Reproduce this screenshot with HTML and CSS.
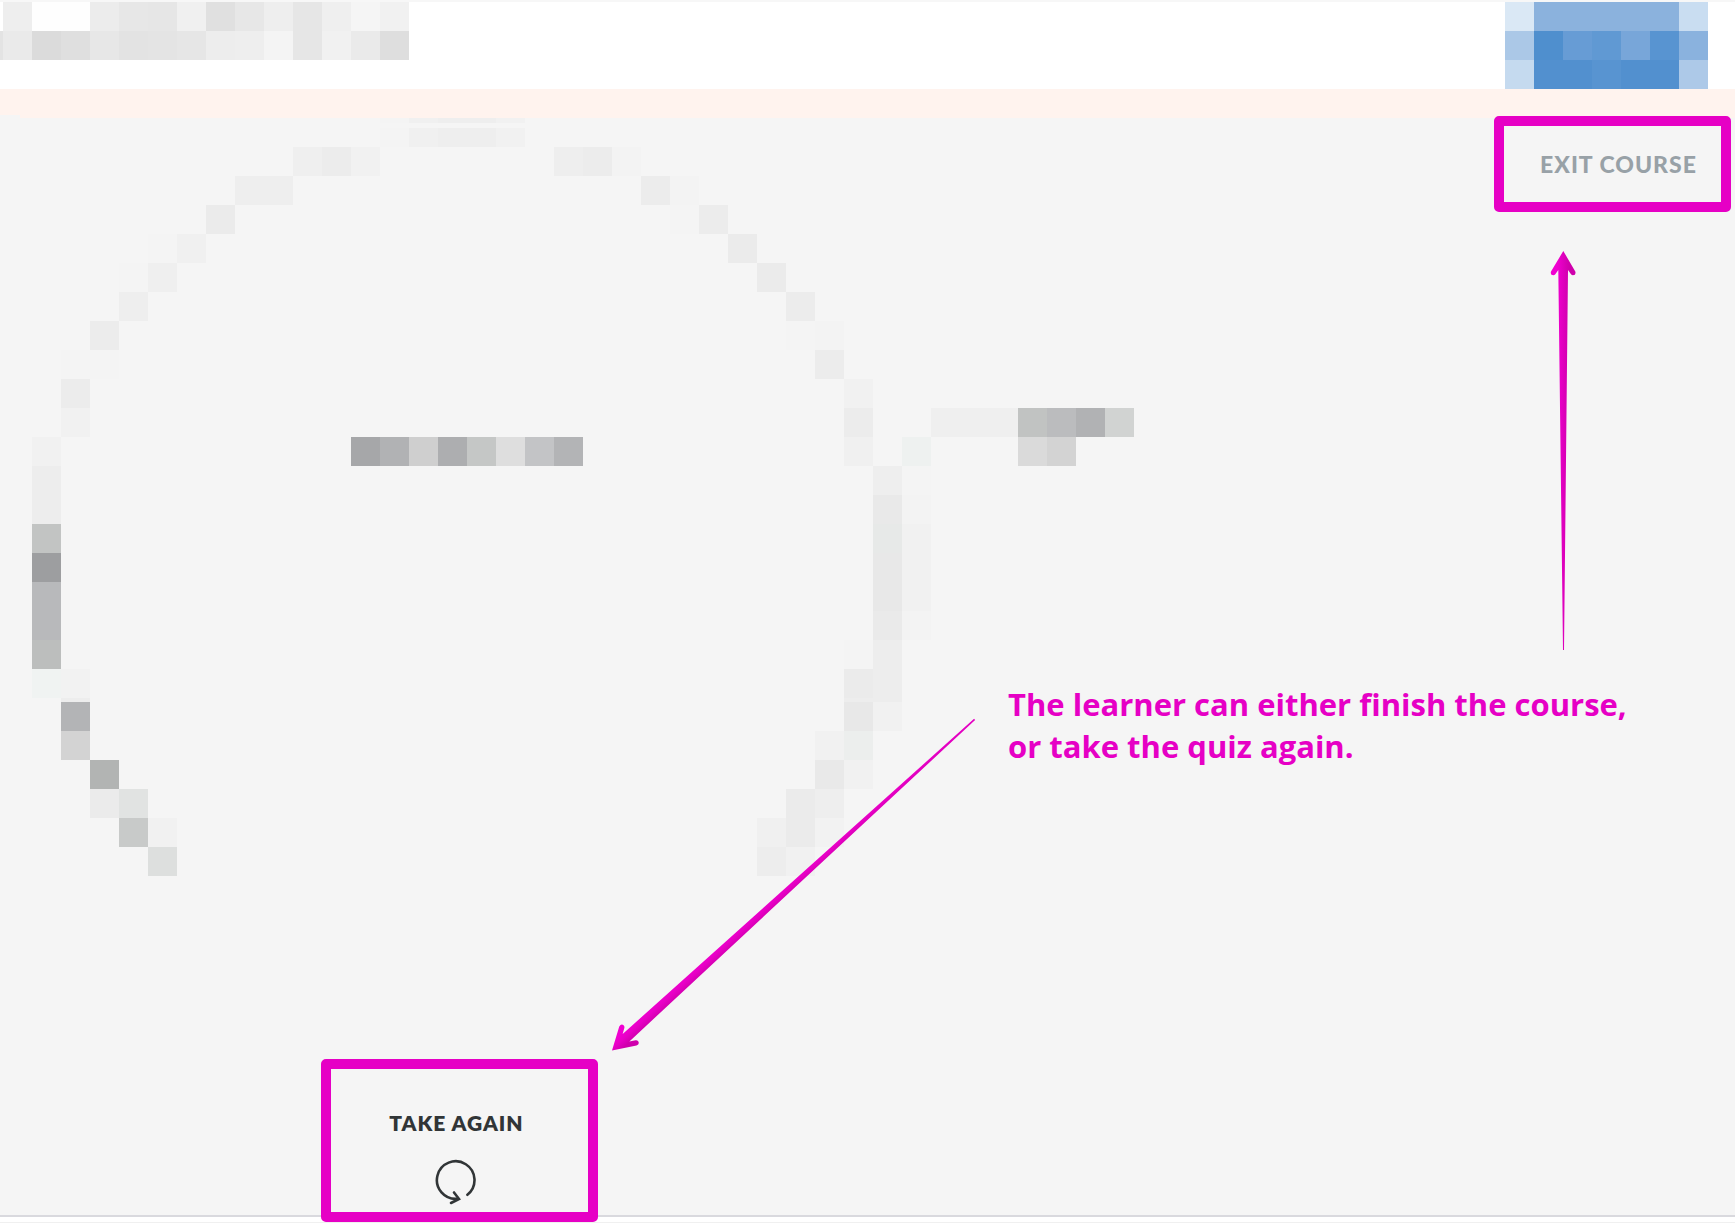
FILE: index.html
```html
<!DOCTYPE html>
<html lang="en">
<head>
<meta charset="utf-8">
<meta name="viewport" content="width=device-width, initial-scale=1">
<title>Quiz results</title>
<link rel="stylesheet" href="styles.css">
</head>
<body>
<header class="topbar">
  <svg class="mosaic" width="409" height="58" viewBox="-3 0 409 58" aria-hidden="true">
    <g transform="scale(29)">
      <rect x="0" y="0" width="1" height="1" fill="#eeeeee"/><rect x="1" y="0" width="2" height="1" fill="#fefefe"/><rect x="3" y="0" width="1" height="1" fill="#ececec"/><rect x="4" y="0" width="1" height="1" fill="#e7e7e7"/><rect x="5" y="0" width="1" height="1" fill="#e6e6e6"/><rect x="6" y="0" width="1" height="1" fill="#f0f0f0"/><rect x="7" y="0" width="1" height="1" fill="#e0e0e0"/><rect x="8" y="0" width="1" height="1" fill="#e7e7e7"/><rect x="9" y="0" width="1" height="1" fill="#eeeeee"/><rect x="10" y="0" width="1" height="1" fill="#e6e6e6"/><rect x="11" y="0" width="1" height="1" fill="#efefef"/><rect x="12" y="0" width="1" height="1" fill="#f5f5f5"/><rect x="13" y="0" width="1" height="1" fill="#f1f1f1"/>
      <rect x="-1" y="1" width="1" height="1" fill="#e3e3e3"/><rect x="0" y="1" width="1" height="1" fill="#eaeaea"/><rect x="1" y="1" width="1" height="1" fill="#dbdbdb"/><rect x="2" y="1" width="1" height="1" fill="#dfdfdf"/><rect x="3" y="1" width="1" height="1" fill="#e7e7e7"/><rect x="4" y="1" width="1" height="1" fill="#e3e3e3"/><rect x="5" y="1" width="1" height="1" fill="#e4e4e4"/><rect x="6" y="1" width="1" height="1" fill="#e6e6e6"/><rect x="7" y="1" width="1" height="1" fill="#ededed"/><rect x="8" y="1" width="1" height="1" fill="#eeeeee"/><rect x="9" y="1" width="1" height="1" fill="#f4f4f4"/><rect x="10" y="1" width="1" height="1" fill="#e6e6e6"/><rect x="11" y="1" width="1" height="1" fill="#f1f1f1"/><rect x="12" y="1" width="1" height="1" fill="#eaeaea"/><rect x="13" y="1" width="1" height="1" fill="#dedede"/>
    </g>
  </svg>
  <svg class="mosaic" width="203" height="87" viewBox="0 0 7 3" aria-hidden="true">
    <rect x="0" y="0" width="1" height="1" fill="#dae8f5"/><rect x="1" y="0" width="5" height="1" fill="#8bb2dd"/><rect x="6" y="0" width="1" height="1" fill="#c9ddf1"/>
    <rect x="0" y="1" width="1" height="1" fill="#abc8e7"/><rect x="1" y="1" width="1" height="1" fill="#4f8fce"/><rect x="2" y="1" width="1" height="1" fill="#679cd5"/><rect x="3" y="1" width="1" height="1" fill="#6099d3"/><rect x="4" y="1" width="1" height="1" fill="#78a6d9"/><rect x="5" y="1" width="1" height="1" fill="#5894d1"/><rect x="6" y="1" width="1" height="1" fill="#8ab2de"/>
    <rect x="0" y="2" width="1" height="1" fill="#c5daef"/><rect x="1" y="2" width="2" height="1" fill="#5290cf"/><rect x="3" y="2" width="1" height="1" fill="#5894d1"/><rect x="4" y="2" width="2" height="1" fill="#5290cf"/><rect x="6" y="2" width="1" height="1" fill="#adc9e8"/>
  </svg>
</header>
<div class="banner"></div>
<main class="stage">
  <section class="result">
    <svg class="mosaic chart" width="928" height="758" viewBox="-3 0 928 758" aria-hidden="true">
      <g transform="scale(29)">
        <rect x="10" y="1" width="1" height="1" fill="#efefef"/><rect x="11" y="1" width="1" height="1" fill="#ececec"/><rect x="12" y="1" width="1" height="1" fill="#f1f1f1"/><rect x="19" y="1" width="1" height="1" fill="#eeeeee"/><rect x="20" y="1" width="1" height="1" fill="#ececec"/><rect x="21" y="1" width="1" height="1" fill="#f3f3f3"/>
        <rect x="8" y="2" width="2" height="1" fill="#eeeeee"/><rect x="22" y="2" width="1" height="1" fill="#ececec"/><rect x="23" y="2" width="1" height="1" fill="#f3f3f3"/>
        <rect x="7" y="3" width="1" height="1" fill="#ebebeb"/><rect x="23" y="3" width="1" height="1" fill="#f4f4f4"/><rect x="24" y="3" width="1" height="1" fill="#ececec"/>
        <rect x="5" y="4" width="1" height="1" fill="#f4f4f4"/><rect x="6" y="4" width="1" height="1" fill="#f0f0f0"/><rect x="25" y="4" width="1" height="1" fill="#ebebeb"/>
        <rect x="4" y="5" width="1" height="1" fill="#f4f4f4"/><rect x="5" y="5" width="1" height="1" fill="#efefef"/><rect x="26" y="5" width="1" height="1" fill="#ebebeb"/>
        <rect x="4" y="6" width="1" height="1" fill="#eeeeee"/><rect x="27" y="6" width="1" height="1" fill="#ececec"/>
        <rect x="3" y="7" width="1" height="1" fill="#ececec"/><rect x="27" y="7" width="1" height="1" fill="#f4f4f4"/><rect x="28" y="7" width="1" height="1" fill="#f3f3f3"/>
        <rect x="2" y="8" width="2" height="1" fill="#f4f4f4"/><rect x="28" y="8" width="1" height="1" fill="#ececec"/>
        <rect x="2" y="9" width="1" height="1" fill="#ececec"/><rect x="29" y="9" width="1" height="1" fill="#f1f1f1"/>
        <rect x="2" y="10" width="1" height="1" fill="#f1f1f1"/><rect x="29" y="10" width="1" height="1" fill="#ececec"/><rect x="32" y="10" width="3" height="1" fill="#efefef"/><rect x="35" y="10" width="1" height="1" fill="#c1c3c2"/><rect x="36" y="10" width="1" height="1" fill="#bbbcbe"/><rect x="37" y="10" width="1" height="1" fill="#b1b2b4"/><rect x="38" y="10" width="1" height="1" fill="#d1d3d2"/>
        <rect x="1" y="11" width="1" height="1" fill="#f1f1f1"/><rect x="12" y="11" width="1" height="1" fill="#a6a7a9"/><rect x="13" y="11" width="1" height="1" fill="#b1b2b4"/><rect x="14" y="11" width="1" height="1" fill="#cfcfcf"/><rect x="15" y="11" width="1" height="1" fill="#adaeb0"/><rect x="16" y="11" width="1" height="1" fill="#c5c7c6"/><rect x="17" y="11" width="1" height="1" fill="#dedede"/><rect x="18" y="11" width="1" height="1" fill="#c3c4c6"/><rect x="19" y="11" width="1" height="1" fill="#b3b4b6"/><rect x="29" y="11" width="1" height="1" fill="#f0f0f0"/><rect x="31" y="11" width="1" height="1" fill="#eef1f0"/><rect x="35" y="11" width="1" height="1" fill="#dadada"/><rect x="36" y="11" width="1" height="1" fill="#d3d3d3"/>
        <rect x="1" y="12" width="1" height="2" fill="#ededed"/><rect x="30" y="12" width="1" height="1" fill="#eeeeee"/><rect x="31" y="12" width="1" height="1" fill="#f4f4f4"/>
        <rect x="30" y="13" width="1" height="1" fill="#e9e9e9"/><rect x="31" y="13" width="1" height="1" fill="#f3f3f3"/>
        <rect x="1" y="14" width="1" height="1" fill="#c2c4c3"/><rect x="30" y="14" width="1" height="1" fill="#e7e9e8"/><rect x="31" y="14" width="1" height="3" fill="#f1f1f1"/>
        <rect x="1" y="15" width="1" height="1" fill="#9d9ea0"/><rect x="30" y="15" width="1" height="2" fill="#e8e8e8"/>
        <rect x="1" y="16" width="1" height="2" fill="#b8b9bb"/>
        <rect x="30" y="17" width="1" height="1" fill="#eaeaea"/><rect x="31" y="17" width="1" height="1" fill="#f3f3f3"/>
        <rect x="1" y="18" width="1" height="1" fill="#bcbebd"/><rect x="29" y="18" width="1" height="1" fill="#f4f4f4"/><rect x="30" y="18" width="1" height="2" fill="#ededed"/>
        <rect x="1" y="19" width="1" height="1" fill="#f0f3f2"/><rect x="2" y="19" width="1" height="1" fill="#f2f2f2"/><rect x="29" y="19" width="1" height="1" fill="#ebebeb"/>
      </g>
      <!-- top edge of the ring, split by a light gap -->
      <path fill="#f4f4f4" d="M377 0h29v5h-29zM377 10h29v19h-29z"/>
      <path fill="#f0f0f0" d="M406 0h29v5h-29zM406 10h29v19h-29z"/>
      <path fill="#eeeeee" d="M435 0h58v5h-58zM435 10h58v19h-58z"/>
      <path fill="#f1f1f1" d="M493 0h29v5h-29zM493 10h29v19h-29z"/>
      <path fill="#ededed" d="M58 580h29v4h-29zM841 580h58v4h-58z"/>
      <!-- lower rows of the ring -->
      <g transform="translate(0 4) scale(29)">
        <rect x="2" y="20" width="1" height="1" fill="#b3b4b6"/><rect x="29" y="20" width="1" height="1" fill="#e8e8e8"/><rect x="30" y="20" width="1" height="1" fill="#f1f1f1"/>
        <rect x="2" y="21" width="1" height="1" fill="#d3d3d3"/><rect x="28" y="21" width="1" height="1" fill="#f1f1f1"/><rect x="29" y="21" width="1" height="1" fill="#eceeed"/>
        <rect x="3" y="22" width="1" height="1" fill="#b2b4b3"/><rect x="28" y="22" width="1" height="1" fill="#e9e9e9"/><rect x="29" y="22" width="1" height="1" fill="#f1f1f1"/>
        <rect x="3" y="23" width="1" height="1" fill="#ebebeb"/><rect x="4" y="23" width="1" height="1" fill="#e1e3e2"/><rect x="27" y="23" width="1" height="2" fill="#ebebeb"/><rect x="28" y="23" width="1" height="1" fill="#eeeeee"/>
        <rect x="4" y="24" width="1" height="1" fill="#c8cac9"/><rect x="5" y="24" width="1" height="1" fill="#f1f1f1"/><rect x="26" y="24" width="1" height="1" fill="#f0f0f0"/><rect x="28" y="24" width="1" height="1" fill="#f2f2f2"/>
        <rect x="5" y="25" width="1" height="1" fill="#dddfde"/><rect x="26" y="25" width="1" height="1" fill="#ededed"/><rect x="27" y="25" width="1" height="1" fill="#f1f1f1"/>
      </g>
    </svg>
    <button class="frame again" type="button">
      <span>TAKE AGAIN</span>
      <svg width="44" height="48" viewBox="0 0 44 48" fill="none" stroke="#313537" stroke-width="2.6" aria-hidden="true">
        <path d="M32.400 36.800A18.800 18.800 0 1 0 22.500 40.800" stroke-linecap="round"/>
        <path d="M19 34.500L24 41L16 45" stroke-linecap="round" stroke-linejoin="miter"/>
      </svg>
    </button>
  </section>
  <aside class="side">
    <button class="frame exit" type="button">EXIT COURSE</button>
    <svg class="arrow-up" width="26" height="400" viewBox="-13 0 26 400" aria-hidden="true">
      <defs>
        <linearGradient id="pink" gradientUnits="userSpaceOnUse" x1="-6" y1="0" x2="6" y2="0">
          <stop offset="0" stop-color="#f000d0"/><stop offset="1" stop-color="#cf00ac"/>
        </linearGradient>
      </defs>
      <path fill="url(#pink)" d="M.3 0L12.300 20.500Q13.300 24 10 24.300Q8.800 24.300 8 23.200L5 19L1 399H0L-4.700 19L-7.700 23.200Q-8.500 24.300 -9.700 24.300Q-13 24 -12 20.500Z"/>
    </svg>
    <p class="note">The learner can either finish the course,<br>or take the quiz again.</p>
  </aside>
  <svg class="arrow-down" width="370" height="340" viewBox="0 0 370 340" aria-hidden="true">
    <defs>
      <linearGradient id="pink-fade" gradientUnits="userSpaceOnUse" x1="-6" y1="0" x2="6" y2="0">
        <stop offset="0" stop-color="#cf00ac"/><stop offset=".6" stop-color="#e800c6"/><stop offset="1" stop-color="#f000d0"/>
      </linearGradient>
    </defs>
    <path transform="translate(2 335.500) rotate(-132.4)" fill="url(#pink-fade)" d="M0 0L12.800 21.500Q14 25.300 10.500 25.600Q9.200 25.600 8.300 24.300L5 19L.8 491H-.8L-5 19L-8.300 24.300Q-9.200 25.600 -10.500 25.600Q-14 25.300 -12.800 21.500Z"/>
  </svg>
</main>
<footer class="footer"></footer>
</body>
</html>
```
FILE: styles.css
```css
* {
  box-sizing: border-box;
}

body {
  margin: 0;
  background: #fff;
  font-family: Lato, "Liberation Sans", sans-serif;
}

svg {
  display: block;
}

.mosaic {
  overflow: visible;
  shape-rendering: crispEdges;
}

.topbar {
  display: flex;
  justify-content: space-between;
  align-items: flex-start;
  padding-right: 27px;
  border-top: 2px solid #f7f7f7;
}

.banner {
  display: flex;
  align-items: flex-end;
  height: 29px;
  background: #fff3ee;
}

.banner::before {
  content: "";
  width: 20px;
  height: 3px;
  background: #f5f5f5;
}

.stage {
  position: relative;
  display: grid;
  grid-template-columns: 1008px 1fr;
  background: #f5f5f5;
  border-bottom: 2px solid #d9d9de;
}

.frame {
  display: flex;
  align-items: center;
  justify-content: center;
  padding: 0;
  border: 10px solid #e600c5;
  border-radius: 5px;
  background: #f5f5f5;
  font-family: inherit;
  cursor: pointer;
}

.again {
  position: relative;
  flex-direction: column;
  justify-content: flex-end;
  gap: 23px;
  width: 277px;
  height: 163px;
  margin: 183px 0 -7px 321px;
  padding: 0 6px 6px 0;
  color: #313537;
  font-size: 21px;
  font-weight: 800;
  line-height: 24px;
  letter-spacing: 1px;
}

.side {
  display: flex;
  flex-direction: column;
  align-items: flex-end;
}

.exit {
  width: 237px;
  height: 96px;
  margin: -2px 4px 0 0;
  padding-left: 12px;
  color: #98a1a7;
  font-size: 23px;
  font-weight: 900;
  line-height: 28px;
  letter-spacing: 1px;
}

.arrow-up {
  margin: 39px 159px 0 0;
}

.note {
  align-self: flex-start;
  margin: 32px 0 0;
  color: #e600c5;
  font-family: "Open Sans", "Noto Sans", sans-serif;
  font-size: 31px;
  font-weight: 700;
  line-height: 42px;
  white-space: nowrap;
}

.arrow-down {
  position: absolute;
  left: 610px;
  top: 597px;
  overflow: visible;
  pointer-events: none;
}

.footer {
  height: 9px;
  background: #fff;
  border-bottom: 3px solid #fff;
  box-shadow: inset 0 -1px #f0f0f0;
}
```
